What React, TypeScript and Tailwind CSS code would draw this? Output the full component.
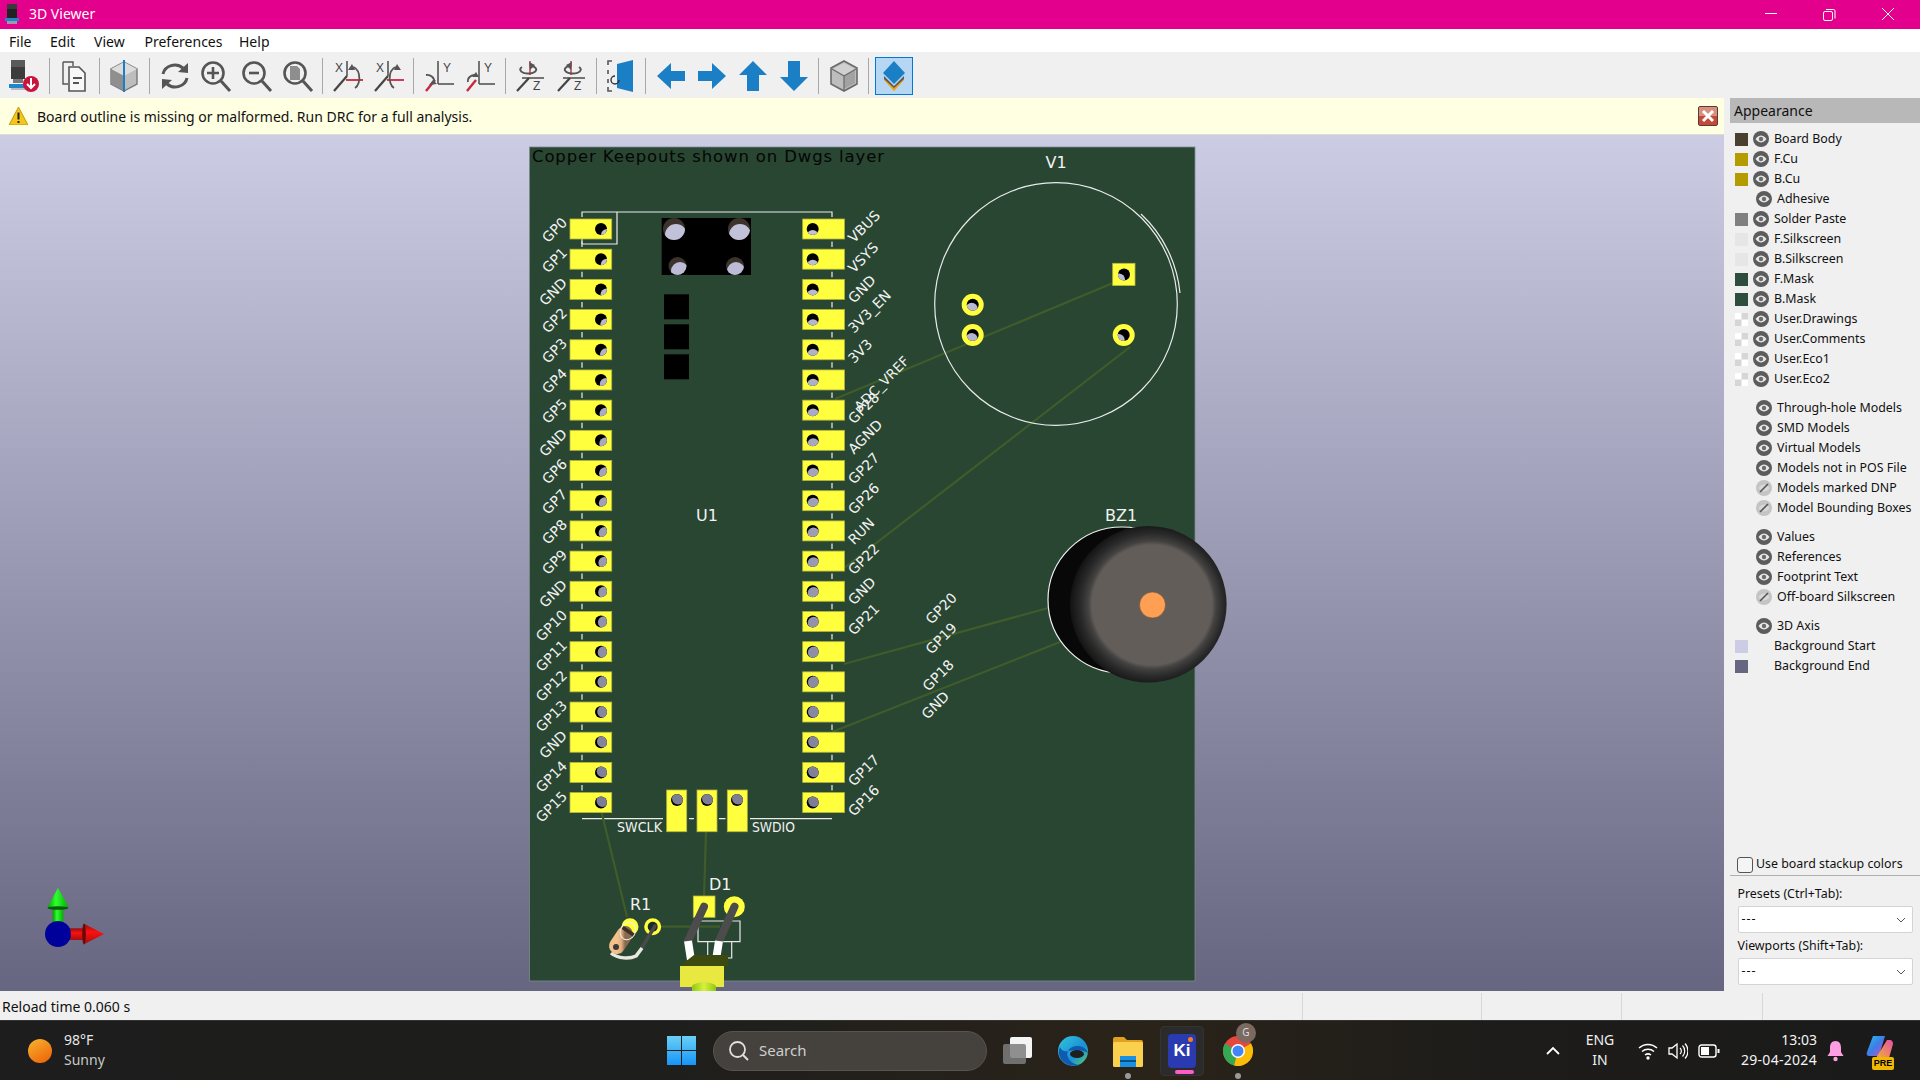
import React from "react";

const G = "#555555";
const Ic = ({ children }: { children: React.ReactNode }) => (
  <svg width="32" height="32" viewBox="0 0 32 32" className="block">{children}</svg>
);
const Btn = ({ children, active }: { children: React.ReactNode; active?: boolean }) => (
  <div className={active ? "w-[38px] h-[38px] mx-[1.5px] flex items-center justify-center bg-[#b5d7f3] border border-[#0078d7]" : "w-[41px] h-[38px] flex items-center justify-center"}>
    {children}
  </div>
);
const Sep = ({ size = "w-[9.2px]" }: { size?: string }) => (
  <div className={`${size} h-[36px] flex justify-center`}>
    <div className="w-px h-full bg-[#a8a8a8]" />
  </div>
);
const Mag = ({ children }: { children?: React.ReactNode }) => (
  <Ic>
    <circle cx="13" cy="13" r="10.5" fill="none" stroke={G} strokeWidth="2.6" />
    <line x1="21" y1="21" x2="30" y2="31" stroke={G} strokeWidth="3" />
    {children}
  </Ic>
);
const RotX = ({ flip }: { flip?: boolean }) => (
  <Ic>
    <text x="3" y="12" fontSize="12" fontFamily="Liberation Sans" fill="#444">X</text>
    <line x1="15" y1="1" x2="15" y2="16" stroke={G} strokeWidth="1.6" />
    <line x1="2" y1="31" x2="15" y2="16" stroke="#444" strokeWidth="2.2" />
    <line x1="14" y1="20" x2="31" y2="20" stroke="#c8283c" strokeWidth="1.8" />
    <path d={flip ? "M25 8a6 10 0 0 0-4 20" : "M19 8a6 10 0 0 1 4 20"} fill="none" stroke={G} strokeWidth="1.8" />
    <polygon points={flip ? "24,4 28,10 21,10" : "20,4 16,10 23,10"} fill={G} />
  </Ic>
);
const RotY = ({ flip }: { flip?: boolean }) => (
  <Ic>
    <text x="20" y="12" fontSize="12" fontFamily="Liberation Sans" fill="#444">Y</text>
    <line x1="15" y1="1" x2="15" y2="24" stroke={G} strokeWidth="1.6" />
    <line x1="15" y1="24" x2="31" y2="24" stroke={G} strokeWidth="1.6" />
    <line x1="3" y1="31" x2="12" y2="20" stroke="#c8283c" strokeWidth="2.4" />
    <path d={flip ? "M12 15a7 6 0 0 0-8 7" : "M3 15a7 6 0 0 1 8 7"} fill="none" stroke={G} strokeWidth="1.8" />
    <polygon points={flip ? "12,12 15,17 8,17" : "10,20 14,24 6,25"} fill={G} />
  </Ic>
);
const RotZ = ({ flip }: { flip?: boolean }) => (
  <Ic>
    <line x1="16" y1="1" x2="16" y2="15" stroke="#c8283c" strokeWidth="1.4" />
    <path d={flip ? "M24 7a8 4 0 1 1-10-1" : "M8 7a8 4 0 1 0 10-1"} fill="none" stroke={G} strokeWidth="1.9" />
    <polygon points={flip ? "17,2 11,5 16,10" : "15,2 21,5 16,10"} fill={G} />
    <line x1="8" y1="18" x2="30" y2="18" stroke={G} strokeWidth="1.6" />
    <line x1="3" y1="31" x2="15" y2="18" stroke="#444" strokeWidth="2.2" />
    <text x="19" y="30" fontSize="12" fontFamily="Liberation Sans" fill="#444">Z</text>
  </Ic>
);
const BLUE = "#1b7fc6";
const Toolbar = () => (
  <div className="h-[46px] bg-[#f0f0f0] flex items-center pl-[3.5px] pt-[2px]">
    <Btn>
      <Ic>
        <rect x="3" y="0" width="14" height="7" fill="#5a5a5a" />
        <rect x="3" y="7" width="14" height="12" fill="#3c3c3c" />
        <rect x="5" y="19" width="10" height="4" fill="#777" />
        <rect x="1" y="24" width="18" height="4" fill="#1f86cc" />
        <rect x="3" y="28" width="14" height="2" fill="#bbb" />
        <circle cx="23" cy="24" r="8" fill="#c8143c" />
        <path d="M23 18v10M19 24l4 4 4-4" stroke="#fff" strokeWidth="2" fill="none" />
      </Ic>
    </Btn>
    <Sep />
    <Btn>
      <Ic>
        <path d="M5 2h10v4M5 2v22h5" fill="none" stroke={G} strokeWidth="1.4" />
        <path d="M11 7h10l6 6v18H11z" fill="#f8f8f8" stroke={G} strokeWidth="1.6" />
        <path d="M15 18h9M15 23h6" stroke={G} strokeWidth="1.8" />
      </Ic>
    </Btn>
    <Sep />
    <Btn>
      <Ic>
        <polygon points="16,2 29,9 29,24 16,31 3,24 3,9" fill="#bdbdbd" stroke="#777" strokeWidth="1.4" />
        <polygon points="16,2 29,9 16,16 3,9" fill="#dcdcdc" />
        <polygon points="3,9 16,16 16,31 3,24" fill="#8f8f8f" />
        <line x1="16" y1="0" x2="16" y2="32" stroke={BLUE} strokeWidth="2" />
      </Ic>
    </Btn>
    <Sep />
    <Btn>
      <Ic>
        <path d="M4 14a12 11 0 0 1 20-6" fill="none" stroke={G} strokeWidth="3" />
        <polygon points="29,3 29,13 19,12" fill={G} />
        <path d="M28 18a12 11 0 0 1-20 6" fill="none" stroke={G} strokeWidth="3" />
        <polygon points="3,29 3,19 13,20" fill={G} />
      </Ic>
    </Btn>
    <Btn>
      <Mag><path d="M13 7v12M7 13h12" stroke={G} strokeWidth="2.6" /></Mag>
    </Btn>
    <Btn>
      <Mag><path d="M8 13h10" stroke={G} strokeWidth="2.6" /></Mag>
    </Btn>
    <Btn>
      <Mag><polygon points="8,6 15,6 18,9 18,20 8,20" fill="#8e8e8e" /></Mag>
    </Btn>
    <Sep />
    <Btn><RotX /></Btn>
    <Btn><RotX flip /></Btn>
    <Sep />
    <Btn><RotY /></Btn>
    <Btn><RotY flip /></Btn>
    <Sep />
    <Btn><RotZ /></Btn>
    <Btn><RotZ flip /></Btn>
    <Sep />
    <Btn>
      <Ic>
        <path d="M7 1H3v4M3 10v4M3 19v4M3 27v4h4" fill="none" stroke={G} strokeWidth="1.6" />
        <polygon points="12,4 28,0 28,32 12,28" fill={BLUE} />
        <path d="M10 16a4 4 0 1 0 4 4" fill="none" stroke="#333" strokeWidth="1.4" />
      </Ic>
    </Btn>
    <Sep size="w-[8.2px]" />
    <Btn><Ic><polygon points="2,16 16,3 16,11 30,11 30,21 16,21 16,29" fill={BLUE} /></Ic></Btn>
    <Btn><Ic><polygon points="30,16 16,3 16,11 2,11 2,21 16,21 16,29" fill={BLUE} /></Ic></Btn>
    <Btn><Ic><polygon points="16,1 30,15 22,15 22,31 10,31 10,15 2,15" fill={BLUE} /></Ic></Btn>
    <Btn><Ic><polygon points="16,31 30,17 22,17 22,1 10,1 10,17 2,17" fill={BLUE} /></Ic></Btn>
    <Sep />
    <Btn>
      <Ic>
        <polygon points="16,1 29,8 29,24 16,31 3,24 3,8" fill="#bdbdbd" stroke="#6a6a6a" strokeWidth="1.6" />
        <polygon points="16,3 27,9 16,15 5,9" fill="#d0d0d0" />
        <polygon points="16,16 27,10 27,23 16,29" fill="#a2a2a2" />
        <path d="M16 16v14M16 16L4 9M16 16l12-7" stroke="#6a6a6a" strokeWidth="1.2" />
      </Ic>
    </Btn>
    <Sep />
    <Btn active>
      <Ic>
        <polygon points="6,20 16,31 26,20 26,17 16,27 6,17" fill="#f0a010" />
        <polygon points="6,16 16,26 26,16 26,19 16,28 6,19" fill="#5a5a5a" />
        <polygon points="16,1 27,13 16,24 5,13" fill={BLUE} />
      </Ic>
    </Btn>
  </div>
);

const Eye = ({ off }: { off?: boolean }) =>
  off ? (
    <svg width="16" height="16" viewBox="0 0 16 16" className="shrink-0">
      <circle cx="8" cy="8" r="8" fill="#c4c4c4" />
      <path d="M2.5 8c2-2.6 4-3.4 5.5-3.4S11.500 5.400 13.500 8c-2 2.600-4 3.400-5.500 3.400S4.500 10.600 2.500 8z" fill="#d8d8d8" />
      <line x1="4" y1="12" x2="12" y2="4" stroke="#555" strokeWidth="1.6" />
    </svg>
  ) : (
    <svg width="16" height="16" viewBox="0 0 16 16" className="shrink-0">
      <circle cx="8" cy="8" r="8" fill="#5c5c5c" />
      <path d="M2.500 8c2-2.700 4-3.500 5.500-3.500s3.500.8 5.500 3.500c-2 2.700-4 3.500-5.500 3.500S4.500 10.700 2.500 8z" fill="#e8e8e8" />
      <circle cx="8" cy="8" r="2.200" fill="#6c6c6c" />
    </svg>
  );
const Check = () => (
  <svg width="13" height="13" viewBox="0 0 13 13" className="shrink-0">
    <rect width="13" height="13" fill="#fff" />
    <rect x="6.500" width="6.500" height="6.500" fill="#d6d6d6" />
    <rect y="6.500" width="6.500" height="6.500" fill="#d6d6d6" />
  </svg>
);
const Row = ({ sw, check, off, label }: { sw?: string; check?: boolean; off?: boolean; label: string }) => (
  <div className="h-[20px] flex items-center pl-[5px] gap-[5px] whitespace-nowrap">
    {check ? <Check /> : <div className="w-[13px] h-[13px] shrink-0" style={{ background: sw }} />}
    <Eye off={off} />
    <span>{label}</span>
  </div>
);
const Row2 = ({ off, label }: { off?: boolean; label: string }) => (
  <div className="h-[20px] flex items-center pl-[26px] gap-[5px] whitespace-nowrap">
    <Eye off={off} />
    <span>{label}</span>
  </div>
);
const BgRow = ({ sw, label }: { sw: string; label: string }) => (
  <div className="h-[20px] flex items-center pl-[5px] whitespace-nowrap">
    <div className="w-[13px] h-[13px] shrink-0" style={{ background: sw }} />
    <span className="ml-[26px]">{label}</span>
  </div>
);
const Select = () => (
  <div className="ml-[7.500px] w-[175px] h-[27px] bg-white border border-[#d4d4d4] rounded-[2px] flex items-center justify-between pl-[3px] pr-[6px]">
    <span className="tracking-[1px]">---</span>
    <svg width="10" height="6" viewBox="0 0 10 6"><path d="M1 1l4 4 4-4" fill="none" stroke="#555" strokeWidth="1" /></svg>
  </div>
);
const Panel = () => (
  <div className="w-[190px] flex flex-col text-[12.4px] text-[#111] bg-[#f0f0f0]">
    <div className="h-[25px] bg-[#b8b8b8] flex items-center pl-[4px] text-[14px]">Appearance</div>
    <div className="pt-[6px]">
      <Row sw="#4a4030" label="Board Body" />
      <Row sw="#b39b00" label="F.Cu" />
      <Row sw="#b39b00" label="B.Cu" />
      <Row2 label="Adhesive" />
      <Row sw="#808080" label="Solder Paste" />
      <Row sw="#e6e6e6" label="F.Silkscreen" />
      <Row sw="#e6e6e6" label="B.Silkscreen" />
      <Row sw="#2f4d3c" label="F.Mask" />
      <Row sw="#2f4d3c" label="B.Mask" />
      <Row check label="User.Drawings" />
      <Row check label="User.Comments" />
      <Row check label="User.Eco1" />
      <Row check label="User.Eco2" />
    </div>
    <div className="pt-[9px]">
      <Row2 label="Through-hole Models" />
      <Row2 label="SMD Models" />
      <Row2 label="Virtual Models" />
      <Row2 label="Models not in POS File" />
      <Row2 off label="Models marked DNP" />
      <Row2 off label="Model Bounding Boxes" />
    </div>
    <div className="pt-[9px]">
      <Row2 label="Values" />
      <Row2 label="References" />
      <Row2 label="Footprint Text" />
      <Row2 off label="Off-board Silkscreen" />
    </div>
    <div className="pt-[9px]">
      <Row2 label="3D Axis" />
      <BgRow sw="#cccce5" label="Background Start" />
      <BgRow sw="#666680" label="Background End" />
    </div>
    <div className="mt-auto flex flex-col">
      <div className="flex items-center h-[22px] pl-[7px] border-b border-[#b0b0b0]">
        <div className="w-[16px] h-[16px] rounded-[3px] border border-[#555] bg-[#f4f4f4] mr-[3px]" />
        <span>Use board stackup colors</span>
      </div>
      <div className="pl-[7.500px] h-[30px] flex items-end pb-[2px]">Presets (Ctrl+Tab):</div>
      <Select />
      <div className="pl-[7.500px] h-[25px] flex items-end pb-[2px]">Viewports (Shift+Tab):</div>
      <Select />
      <div className="h-[8px]" />
    </div>
  </div>
);

const LEFT = ["GP0","GP1","GND","GP2","GP3","GP4","GP5","GND","GP6","GP7","GP8","GP9","GND","GP10","GP11","GP12","GP13","GND","GP14","GP15"];
const RIGHT: (string | null)[] = ["VBUS","VSYS","GND","3V3_EN","3V3",null,"GP28","AGND","GP27","GP26","RUN","GP22","GND","GP21",null,null,null,null,"GP17","GP16"];
const ROWS = Array.from({ length: 20 }, (_, i) => 229 + i * 30.19);
const mix = (y: number) => {
  const t = (y - 135) / 855;
  const a = (s: number, e: number) => Math.round(s + (e - s) * t);
  return `rgb(${a(204,102)},${a(204,102)},${a(229,128)})`;
};
const Hole = ({ x, y, r, dx, dy, base = "#000" }: { x: number; y: number; r: number; dx: number; dy: number; base?: string }) => {
  const id = `h${Math.round(x)}_${Math.round(y)}`;
  return (
    <g>
      <clipPath id={id}><circle cx={x} cy={y} r={r} /></clipPath>
      <circle cx={x} cy={y} r={r} fill={base} />
      <circle cx={x + dx} cy={y + dy} r={r} fill={mix(y) } clipPath={`url(#${id})`} />
    </g>
  );
};
const F = "DejaVu Sans";
const Lab = ({ x, y, t, anchor = "start", size = 14 }: { x: number; y: number; t: string; anchor?: "start" | "end"; size?: number }) => (
  <text x={x} y={y} fontFamily={F} fontSize={size} fill="#f2f2f2" textAnchor={anchor} transform={`rotate(-45 ${x} ${y})`}>{t}</text>
);
const RAT = "#3f5c2a";
const Rat = ({ d }: { d: string }) => <path d={d} stroke={RAT} strokeWidth="2.200" fill="none" />;
const PAD = { fill: "#ffff3e", stroke: "#b5b53c", strokeWidth: 0.8 };

const Pcb = () => (
  <svg width="1724" height="856" viewBox="0 135 1724 856" className="block">
    <defs>
      <radialGradient id="bz" cx="0.524" cy="0.504" r="0.524">
        <stop offset="0" stopColor="#625d59" />
        <stop offset="0.73" stopColor="#625d59" />
        <stop offset="0.78" stopColor="#434241" />
        <stop offset="0.87" stopColor="#2a2a2a" />
        <stop offset="1" stopColor="#121212" />
      </radialGradient>
      <linearGradient id="gr" x1="0" x2="1" y1="0" y2="0">
        <stop offset="0" stopColor="#00a000" />
        <stop offset="0.4" stopColor="#30ff30" />
        <stop offset="1" stopColor="#00b000" />
      </linearGradient>
      <linearGradient id="rd" x1="0" x2="0" y1="0" y2="1">
        <stop offset="0" stopColor="#901010" />
        <stop offset="0.4" stopColor="#ff1010" />
        <stop offset="1" stopColor="#a01010" />
      </linearGradient>
      <linearGradient id="led" x1="0" x2="1" y1="0" y2="0">
        <stop offset="0" stopColor="#8fc810" />
        <stop offset="0.5" stopColor="#d8f040" />
        <stop offset="1" stopColor="#8fc810" />
      </linearGradient>
      <linearGradient id="res" x1="0" x2="1" y1="0" y2="0">
        <stop offset="0" stopColor="#f4c08c" />
        <stop offset="0.55" stopColor="#e0b080" />
        <stop offset="1" stopColor="#8a6a4c" />
      </linearGradient>
    </defs>
    <rect x="529.500" y="147" width="665.500" height="834" fill="#284632" stroke="#7c8a90" strokeWidth="0.8" />
    <text x="532" y="161.500" fontFamily={F} fontSize="16.5" fill="#050505" textLength="352" lengthAdjust="spacing">Copper Keepouts shown on Dwgs layer</text>

    {/* silkscreen */}
    <path d="M582 217V212H832V217M617 212V244H582V239" fill="none" stroke="#ececec" strokeWidth="1.200" />
    {ROWS.slice(0, 19).map((y) => (
      <g key={y} stroke="#e0e0e0" strokeWidth="1.300">
        <line x1="582" x2="582" y1={y + 12.500} y2={y + 18} />
        <line x1="832" x2="832" y1={y + 12.500} y2={y + 18} />
      </g>
    ))}
    <path d="M582 818.700H663M689 818.700H694M719 818.700H725.500M750 818.700H832" stroke="#ececec" strokeWidth="1.200" />

    {/* ratsnest */}
    <Rat d="M835 399L1113 283" />
    <Rat d="M1130 347L844 568" />
    <Rat d="M1048 608L844 664" />
    <Rat d="M1060 642L832 732" />
    <Rat d="M601.700 812.700L627 916.700" />
    <Rat d="M706 831.700L704 896.700" />
    <Rat d="M660 926.700H720" />

    {/* pads */}
    {ROWS.map((y, i) => {
      const t = i / 19;
      return (
        <g key={i}>
          <rect x="570" y={y - 10} width="41.700" height="20" {...PAD} />
          <rect x="802.700" y={y - 10} width="41.700" height="20" {...PAD} />
          <Hole x={601} y={y} r={6} dx={6 - 4.500 * t} dy={6 - 7.500 * t} />
          <Hole x={812.700} y={y} r={6} dx={1.500 * t} dy={7 - 8.500 * t} />
        </g>
      );
    })}
    {[666.700, 697, 727.300].map((x, i) => (
      <g key={x}>
        <rect x={x} y="790" width="20" height="41.700" {...PAD} />
        <Hole x={[677, 707, 737][i]} y={800} r={6} dx={1} dy={-1.500} />
      </g>
    ))}

    {/* black block */}
    <rect x="661.700" y="218" width="89.300" height="57" fill="#000" />
    <Hole x={674} y={229} r={11} dx={2} dy={6} base="#3c342c" />
    <Hole x={739} y={229} r={11} dx={1} dy={6} base="#3c342c" />
    <Hole x={677.500} y={266} r={9} dx={2.500} dy={5} base="#3c342c" />
    <Hole x={735} y={266} r={9} dx={1} dy={5} base="#3c342c" />
    <rect x="664" y="294.300" width="25" height="25" fill="#000" />
    <rect x="664" y="324.300" width="25" height="25" fill="#000" />
    <rect x="664" y="354.300" width="25" height="25" fill="#000" />

    {/* labels */}
    {LEFT.map((t, i) => <Lab key={i} x={568} y={ROWS[i] - 5.500} t={t} anchor="end" />)}
    {RIGHT.map((t, i) => t && <Lab key={i} x={854} y={ROWS[i] + 14.500} t={t} />)}
    <Lab x={860} y={412} t="ADC_VREF" size={13.5} />
    <Lab x={931.500} y={625} t="GP20" />
    <Lab x={931.500} y={655} t="GP19" />
    <Lab x={928.500} y={692} t="GP18" />
    <Lab x={927.500} y={720} t="GND" />
    <text x="617" y="832" fontFamily={F} fontSize="13.500" fill="#f2f2f2" textLength="45" lengthAdjust="spacingAndGlyphs">SWCLK</text>
    <text x="752" y="832" fontFamily={F} fontSize="13.500" fill="#f2f2f2" textLength="43" lengthAdjust="spacingAndGlyphs">SWDIO</text>
    <text x="707" y="521" fontFamily={F} fontSize="16" fill="#f2f2f2" textAnchor="middle">U1</text>

    {/* V1 */}
    <text x="1056" y="168" fontFamily={F} fontSize="16" fill="#f2f2f2" textAnchor="middle">V1</text>
    <circle cx="1056" cy="304" r="121.300" fill="none" stroke="#ececec" strokeWidth="1.200" />
    <path d="M1141 214A124.300 124.300 0 0 1 1180 293" fill="none" stroke="#ececec" strokeWidth="1.200" />
    <rect x="1112.700" y="263.300" width="22.300" height="22.300" {...PAD} />
    <Hole x={1124} y={274.500} r={6} dx={-5} dy={5} />
    {[[972.700, 304.700], [972.700, 335], [1123.700, 335]].map(([x, y]) => (
      <g key={y + x}>
        <circle cx={x} cy={y} r={11} fill="#ffff3e" />
        <Hole x={x} y={y} r={6} dx={x > 1000 ? -5 : -1} dy={x > 1000 ? 5 : 4} />
      </g>
    ))}

    {/* BZ1 */}
    <text x="1121" y="520.500" fontFamily={F} fontSize="16" fill="#f2f2f2" textAnchor="middle">BZ1</text>
    <ellipse cx="1122" cy="600" rx="74" ry="73" fill="#080808" stroke="#f0f0f0" strokeWidth="1.200" />
    <circle cx="1148.300" cy="604.300" r="78.300" fill="url(#bz)" />
    <circle cx="1152.500" cy="605" r="13" fill="#ff9f54" stroke="#6a5040" strokeWidth="0.600" />

    {/* R1 */}
    <text x="630" y="910" fontFamily={F} fontSize="16" fill="#f2f2f2">R1</text>
    <circle cx="630" cy="926.700" r="8.500" fill="#ffff3e" />
    <circle cx="652.700" cy="926.700" r="8.500" fill="#ffff3e" />
    <circle cx="652.700" cy="926.700" r="5" fill="#1c2c20" />
    <path d="M655 926L641.700 948" stroke="#4a4a4a" strokeWidth="3.500" fill="none" strokeLinecap="round" />
    <path d="M611 953C618 959 630 959 636 956L642 948" stroke="#e8e8e0" strokeWidth="3.500" fill="none" />
    <path d="M617 946L625 934" stroke="url(#res)" strokeWidth="16" strokeLinecap="round" fill="none" />
    <path d="M629.500 930L627.500 933" stroke="#3a3028" strokeWidth="14" fill="none" />
    <ellipse cx="628" cy="931" rx="9" ry="7.500" transform="rotate(-60 628 931)" fill="none" stroke="#f0f0f0" strokeWidth="0.900" />
    <circle cx="616" cy="947" r="3" fill="#3a3a3a" />

    {/* D1 */}
    <text x="709" y="890" fontFamily={F} fontSize="16" fill="#f2f2f2">D1</text>
    <rect x="693.300" y="896" width="21.700" height="21.300" {...PAD} />
    <circle cx="734.300" cy="906.700" r="10.500" fill="#ffff3e" />
    <path d="M698 921H740V941.700H698zM707.700 941.700V958H731.700V941.700" fill="none" stroke="#e8e8e8" strokeWidth="1.200" />
    <path d="M704 906.700L688 941" stroke="#4c4c4c" strokeWidth="8" strokeLinecap="round" fill="none" />
    <path d="M734.500 906.700L719 941" stroke="#4c4c4c" strokeWidth="8" strokeLinecap="round" fill="none" />
    <path d="M688 941L691 960" stroke="#fff" strokeWidth="8" fill="none" />
    <path d="M719 941L716 960" stroke="#fff" strokeWidth="8" fill="none" />
    <polygon points="685,962 694,955 728,955 728,966 724,967 680,967" fill="#3c4a10" />
    <rect x="680" y="966" width="44" height="21" fill="#e8e840" />
    <path d="M692 991V986C696 981 712 981 716 986V991z" fill="url(#led)" />

    {/* Axes */}
    <rect x="52.700" y="906" width="10.600" height="28" fill="url(#gr)" />
    <polygon points="58,888 68.500,907 47.500,907" fill="url(#gr)" />
    <ellipse cx="58" cy="908" rx="10.500" ry="1.800" fill="#0a5a0a" />
    <rect x="58" y="928.300" width="26" height="11.700" fill="url(#rd)" />
    <polygon points="104,934 84,944.300 84,923.700" fill="url(#rd)" />
    <ellipse cx="84" cy="934" rx="1.800" ry="10.500" fill="#6a0808" />
    <circle cx="58" cy="934" r="13" fill="#00009a" />
  </svg>
);

const Taskbar = () => (
  <div className="h-[60px] flex items-center text-white bg-[linear-gradient(90deg,#1c1d1c_0%,#1e1e1c_35%,#2a2319_60%,#1d1c1a_78%,#1a1a1a_100%)] border-t border-[#333]">
    <div className="w-[667px] flex items-center pl-[28px] shrink-0">
      <svg width="24" height="24" viewBox="0 0 24 24">
        <defs>
          <linearGradient id="sun" x1="0" x2="0.6" y1="0" y2="1">
            <stop offset="0" stopColor="#f6b52e" />
            <stop offset="1" stopColor="#ef6a0c" />
          </linearGradient>
        </defs>
        <circle cx="12" cy="12" r="12" fill="url(#sun)" />
      </svg>
      <div className="ml-[12px] flex flex-col text-[14px] leading-[20px] text-[#e8e8e8] -mt-[2px]">
        <span>98°F</span>
        <span className="text-[#c8c8c8]">Sunny</span>
      </div>
    </div>
    <svg width="29" height="29" viewBox="0 0 29 29" className="shrink-0">
      <defs>
        <linearGradient id="win" x1="0" x2="0" y1="0" y2="1">
          <stop offset="0" stopColor="#6ad0f5" />
          <stop offset="1" stopColor="#1695f8" />
        </linearGradient>
      </defs>
      <path d="M0 0h14v14H0zM15 0h14v14H15zM0 15h14v14H0zM15 15h14v14H15z" fill="url(#win)" />
    </svg>
    <div className="ml-[17px] w-[274px] h-[40px] rounded-full bg-[#45423d] border border-[#565450] flex items-center pl-[14px] shrink-0">
      <svg width="22" height="22" viewBox="0 0 22 22">
        <circle cx="9.500" cy="9.500" r="7.500" fill="none" stroke="#e0e0e0" strokeWidth="1.800" />
        <line x1="15" y1="15" x2="20" y2="20" stroke="#e0e0e0" strokeWidth="2" />
      </svg>
      <span className="ml-[9px] text-[15px] text-[#cfcfcf]">Search</span>
    </div>
    <svg width="30" height="28" viewBox="0 0 30 28" className="ml-[16px] shrink-0">
      <rect x="7" y="0" width="22" height="21" rx="2" fill="#f4f4f4" />
      <rect x="0" y="7" width="23" height="20" rx="2" fill="#7c7c7c" fillOpacity="0.85" />
    </svg>
    <svg width="30" height="32" viewBox="0 0 30 32" className="ml-[25px] shrink-0">
      <defs>
        <linearGradient id="edge" x1="0" x2="1" y1="0" y2="1">
          <stop offset="0" stopColor="#33c6d8" />
          <stop offset="0.6" stopColor="#1a8fd8" />
          <stop offset="1" stopColor="#60d060" />
        </linearGradient>
      </defs>
      <circle cx="15" cy="16" r="15" fill="url(#edge)" />
      <path d="M30 18C28 10 14 8 10 16c-3 7 4 14 12 14C8 34-3 22 2 12 6 22 16 10 30 18z" fill="#0f5bb0" />
      <ellipse cx="19" cy="19" rx="7" ry="4" fill="#1f1f1f" />
    </svg>
    <div className="ml-[25px] relative shrink-0 w-[30px] h-[32px]">
      <svg width="30" height="32" viewBox="0 0 30 32">
        <path d="M0 4a2 2 0 0 1 2-2h9l3 3h14a2 2 0 0 1 2 2v3H0z" fill="#e0a020" />
        <rect y="7" width="30" height="25" rx="1.500" fill="#fad04e" />
        <rect x="7" y="21" width="16" height="11" fill="#1a90e0" />
        <rect x="7" y="25" width="16" height="2" fill="#0a4f88" />
      </svg>
      <div className="absolute left-[12px] top-[38px] w-[6px] h-[6px] rounded-full bg-[#9a9a9a]" />
    </div>
    <div className="ml-[17px] w-[44px] h-[50px] bg-[#2b2b2b] rounded-[4px] border border-[#333] flex items-center justify-center relative shrink-0">
      <div className="w-[28px] h-[34px] rounded-[4px] bg-[#2a3ab0] flex items-center justify-center relative">
        <span className="text-white font-bold text-[17px] font-['Liberation_Sans',sans-serif]">Ki</span>
        <div className="absolute right-[3px] top-[3px] w-[5px] h-[5px] rounded-full bg-[#f08020]" />
      </div>
      <div className="absolute left-[14px] bottom-[1px] w-[19px] h-[4px] rounded-full bg-[#ff5cc8]" />
    </div>
    <div className="ml-[19px] relative shrink-0 w-[30px] h-[30px]">
      <svg width="30" height="30" viewBox="0 0 30 30">
        <circle cx="15" cy="15" r="15" fill="#e8453c" />
        <path d="M15 15L2 7.500A15 15 0 0 0 11 29.500z" fill="#34a853" />
        <path d="M15 15L11 29.500A15 15 0 0 0 28 7.500z" fill="#fbbc05" />
        <circle cx="15" cy="15" r="7" fill="#fff" />
        <circle cx="15" cy="15" r="5.500" fill="#4285f4" />
      </svg>
      <div className="absolute left-[1px] top-[37px] ml-[11px] w-[6px] h-[6px] rounded-full bg-[#9a9a9a]" />
      <div className="absolute left-[13px] top-[-13px] w-[20px] h-[20px] rounded-full bg-[#7a6a62] flex items-center justify-center text-[10px] text-[#ddd]">G</div>
    </div>
    <svg width="14" height="9" viewBox="0 0 14 9" className="ml-[293px] shrink-0">
      <path d="M1 8l6-6 6 6" fill="none" stroke="#fff" strokeWidth="1.800" />
    </svg>
    <div className="ml-[24px] w-[32px] flex flex-col items-center text-[14px] leading-[20px] text-[#f0f0f0] shrink-0 -mt-[2px]">
      <span>ENG</span>
      <span>IN</span>
    </div>
    <svg width="20" height="18" viewBox="0 0 20 18" className="ml-[22px] shrink-0">
      <path d="M1 6a13 13 0 0 1 18 0M4 9.500a9 9 0 0 1 12 0M7 13a5 5 0 0 1 6 0" fill="none" stroke="#fff" strokeWidth="1.500" />
      <circle cx="10" cy="16" r="1.700" fill="#fff" />
    </svg>
    <svg width="20" height="18" viewBox="0 0 20 18" className="ml-[10px] shrink-0">
      <path d="M1 6h3l5-4v14l-5-4H1z" fill="none" stroke="#fff" strokeWidth="1.300" />
      <path d="M12 6a4 4 0 0 1 0 6M14.500 3.500a8 8 0 0 1 0 11M17 1.500a11 11 0 0 1 0 15" fill="none" stroke="#fff" strokeWidth="1.200" />
    </svg>
    <svg width="22" height="14" viewBox="0 0 22 14" className="ml-[10px] shrink-0">
      <rect x="1" y="1" width="17" height="12" rx="2.500" fill="none" stroke="#fff" strokeWidth="1.400" />
      <rect x="3" y="3" width="8" height="8" fill="#fff" />
      <rect x="19.500" y="5" width="2" height="4" fill="#fff" />
    </svg>
    <div className="ml-auto flex items-center pr-[25px]">
      <div className="flex flex-col items-end text-[14px] leading-[20px] text-[#f4f4f4] -mt-[2px]">
        <span>13:03</span>
        <span className="tracking-[0.3px]">29-04-2024</span>
      </div>
      <svg width="17" height="22" viewBox="0 0 17 22" className="ml-[10px]">
        <path d="M8.500 1c4 0 5.500 3 5.500 7v4l2.500 4H.5L3 12V8c0-4 1.500-7 5.500-7z" fill="#ff9de2" />
        <circle cx="8.500" cy="19" r="2.200" fill="#ff9de2" />
      </svg>
      <div className="ml-[21px] w-[30px] h-[34px] relative">
        <svg width="30" height="28" viewBox="0 0 30 28">
          <defs>
            <linearGradient id="cop" x1="0" x2="1" y1="0" y2="1">
              <stop offset="0" stopColor="#21c4e8" />
              <stop offset="0.5" stopColor="#3f7ce8" />
              <stop offset="1" stopColor="#d04fc0" />
            </linearGradient>
            <linearGradient id="cop2" x1="0" x2="1" y1="1" y2="0">
              <stop offset="0" stopColor="#f0b030" />
              <stop offset="1" stopColor="#e850a8" />
            </linearGradient>
          </defs>
          <path d="M8 2h12l-6 20H4C2 22 1 20 2 18z" fill="url(#cop)" />
          <path d="M22 6h3c2 0 3 2 3 4l-4 14H11z" fill="url(#cop2)" />
        </svg>
        <div className="absolute left-[7px] bottom-[-2px] w-[22px] h-[13px] bg-[#f2b800] rounded-[2px] text-[9px] leading-[13px] text-center font-bold text-black font-['Liberation_Sans',sans-serif]">PRE</div>
      </div>
    </div>
  </div>
);

export default function App() {
  return (
    <div className="w-[1920px] h-[1080px] overflow-hidden flex flex-col font-['Noto_Sans',sans-serif] bg-[#f0f0f0]">
      <div className="h-[29px] bg-[#e3008c] flex items-center text-white text-[14px] shrink-0">
        <svg width="14" height="21" viewBox="0 0 14 21" className="ml-[5px]">
          <rect x="2" y="0" width="10" height="5" fill="#3a3a3a" />
          <rect x="2" y="5" width="10" height="9" fill="#222" />
          <rect x="0" y="14" width="14" height="3" fill="#1f86cc" />
          <rect x="2" y="17" width="10" height="3" fill="#9a9aaa" />
        </svg>
        <span className="ml-[10px] -mt-[2px]">3D Viewer</span>
        <div className="ml-auto flex items-center">
          <svg width="58" height="29" viewBox="0 0 58 29"><line x1="23" y1="13.500" x2="35" y2="13.500" stroke="#fff" /></svg>
          <svg width="58" height="29" viewBox="0 0 58 29">
            <rect x="23.500" y="11.500" width="9" height="9" rx="1.500" fill="none" stroke="#fff" />
            <path d="M26 9.500h7.500a1.500 1.500 0 0 1 1.500 1.500v7.500" fill="none" stroke="#fff" />
          </svg>
          <svg width="60" height="29" viewBox="0 0 60 29" className="mr-[2px]">
            <path d="M24 8l12 12M36 8L24 20" stroke="#fff" />
          </svg>
        </div>
      </div>
      <div className="h-[23px] bg-white flex items-center text-[14px] text-[#111] shrink-0 pl-[9px] pt-[1px]">
        <span className="w-[41px]">File</span>
        <span className="w-[44px]">Edit</span>
        <span className="w-[50.500px]">View</span>
        <span className="w-[94.500px]">Preferences</span>
        <span>Help</span>
      </div>
      <Toolbar />
      <div className="h-[895px] flex shrink-0">
        <div className="w-[1724px] flex flex-col shrink-0">
          <div className="h-[37px] bg-[#ffffe1] flex items-center text-[14px] text-[#111] pl-[9px] relative border-b border-[#dcdcd0]">
            <svg width="19" height="18" viewBox="0 0 19 18">
              <polygon points="9.500,0 19,18 0,18" fill="#f5c518" stroke="#b08a10" strokeWidth="0.800" />
              <rect x="8.500" y="5.500" width="2" height="7" fill="#222" />
              <rect x="8.500" y="14" width="2" height="2" fill="#222" />
            </svg>
            <span className="ml-[9px]">Board outline is missing or malformed. Run DRC for a full analysis.</span>
            <div className="ml-auto mr-[6px] w-[20px] h-[20px] border border-[#5a3a3a] rounded-[2px] bg-[linear-gradient(#d98f80_50%,#c44a38_50%)] flex items-center justify-center">
              <svg width="14" height="14" viewBox="0 0 14 14"><path d="M2 2l10 10M12 2L2 12" stroke="#fff" strokeWidth="3" /></svg>
            </div>
          </div>
          <div className="h-[856px] bg-[linear-gradient(#cccce5,#666680)] shrink-0"><Pcb /></div>
          <div className="h-[2px] bg-[#f0f0f0]" />
        </div>
        <div className="w-[6px] shrink-0" />
        <Panel />
      </div>
      <div className="h-[27px] bg-[#f0f0f0] flex items-center text-[14px] text-[#111] relative shrink-0">
        <span className="pl-[2px] w-[1302px]">Reload time 0.060 s</span>
        <div className="w-[179px] h-full border-l border-[#d8d8d8]" />
        <div className="w-[140px] h-full border-l border-[#d8d8d8]" />
        <div className="w-[141px] h-full border-l border-[#d8d8d8]" />
        <div className="flex-1 h-full border-l border-[#d8d8d8]" />
      </div>
      <Taskbar />
    </div>
  );
}
